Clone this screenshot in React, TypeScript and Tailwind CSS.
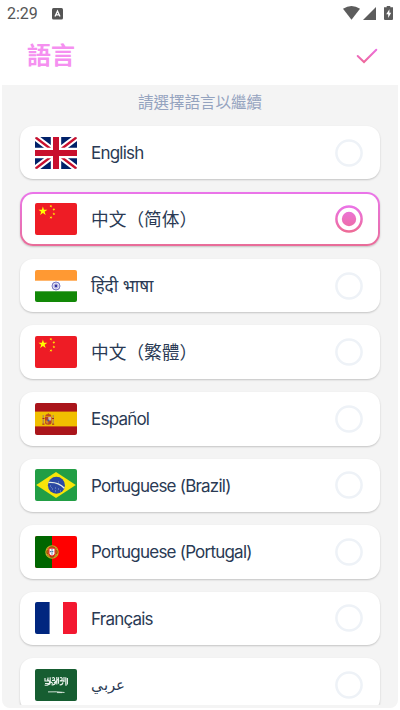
import { useState } from 'react';
import type { ReactNode } from 'react';
import { clsx } from 'clsx';

const Flag = ({ children }: { children: ReactNode }) => (
  <svg viewBox="0 0 42 32" className="h-8 w-[42px] shrink-0 rounded-[2px]">
    {children}
  </svg>
);

const FlagUK = () => (
  <Flag>
    <rect width="42" height="32" fill="#012169" />
    <path d="M0 0 42 32M42 0 0 32" stroke="#fff" strokeWidth="6.4" />
    <path d="M0 0 21 16M42 0 21 16" stroke="#c8102e" strokeWidth="2.4" />
    <path d="M21 16 42 32M21 16 0 32" stroke="#c8102e" strokeWidth="2.4" />
    <path d="M21 0V32M0 16H42" stroke="#fff" strokeWidth="10.4" />
    <path d="M21 0V32M0 16H42" stroke="#c8102e" strokeWidth="6" />
  </Flag>
);

const STAR = '0,-1 .2245,-.309 .951,-.309 .363,.118 .588,.809 0,.382 -.588,.809 -.363,.118 -.951,-.309 -.2245,-.309';

const FlagChina = () => (
  <Flag>
    <rect width="42" height="32" fill="#ee1c25" />
    <g fill="#ffff00">
      <polygon points={STAR} transform="translate(7.9 8.2) scale(4.7)" />
      <polygon points={STAR} transform="translate(15.9 3.2) rotate(23) scale(1.6)" />
      <polygon points={STAR} transform="translate(18.9 6.5) rotate(46) scale(1.6)" />
      <polygon points={STAR} transform="translate(18.9 10.9) scale(1.6)" />
      <polygon points={STAR} transform="translate(15.9 14.5) rotate(20) scale(1.6)" />
    </g>
  </Flag>
);

const FlagIndia = () => (
  <Flag>
    <rect width="42" height="32" fill="#fff" />
    <rect width="42" height="10.7" fill="#ff9933" />
    <rect y="21.3" width="42" height="10.7" fill="#128807" />
    <circle cx="21" cy="16" r="4" fill="#e6e6f5" stroke="#5c5cb4" strokeWidth=".8" />
    <g stroke="#8080c4" strokeWidth=".4">
      <path d="M17 16h8M21 12v8M18.2 13.2l5.6 5.6M23.8 13.2l-5.6 5.6" />
    </g>
    <circle cx="21" cy="16" r="1.4" fill="#3535a0" />
  </Flag>
);

const FlagSpain = () => (
  <Flag>
    <rect width="42" height="32" fill="#aa151b" />
    <rect y="8.6" width="42" height="14.8" fill="#f1bf00" />
    <path d="M8.2 12v9M18.2 12v9" stroke="#b08a55" strokeWidth="1.3" />
    <path d="M7.3 21.2h2.2M17 21.2h2.2M7.5 15.5h2M17 15.5h2" stroke="#ad2519" strokeWidth="1" />
    <path d="M10 13.7h6.6v5.5q0 2.5-3.3 2.5T10 19.2z" fill="#b5402a" />
    <path d="M13.3 14h2.8v3.5h-2.8z" fill="#d2b6b0" />
    <path d="M10.5 17.6h2.8v3.2q-2.6 0-2.8-1.8z" fill="#d98b20" />
    <circle cx="13.3" cy="17.6" r="1" fill="#3a63a0" />
    <path d="M10.3 13.3q0-2.4 3-2.4t3 2.4z" fill="#c4471b" />
    <path d="M13.3 10.2v1.2" stroke="#a86a1d" />
  </Flag>
);

const FlagBrazil = () => (
  <Flag>
    <rect width="42" height="32" fill="#229e45" />
    <path d="M21 3 40.8 16 21 29 1.2 16z" fill="#f8e509" />
    <circle cx="21.4" cy="16.2" r="8.5" fill="#2b49a3" />
    <path d="M13.4 13.5Q23.5 12.8 29.4 19.3" stroke="#e5eee5" strokeWidth="1.3" fill="none" />
    <path d="M15 17h1M17 20h1M20 19h1M23 20h1M25 22h1M20 22h1M23 13h.8M16 18.6h.6" stroke="#9fb6d4" strokeWidth=".8" />
  </Flag>
);

const FlagPortugal = () => (
  <Flag>
    <rect width="42" height="32" fill="#ff0000" />
    <rect width="17" height="32" fill="#006600" />
    <circle cx="17" cy="16" r="6.2" fill="#a43b08" stroke="#bdb025" strokeWidth="1.1" />
    <path d="M11 14.2q6-4.4 12 0M11 18q6 3.5 12 0M13.7 11q-1.6 5 .6 10.2M20.3 11q1.6 5-.6 10.2" stroke="#d0c52c" strokeWidth=".7" fill="none" />
    <path d="M13.4 11.8h7.2v5.5q0 3.2-3.6 3.2t-3.6-3.2z" fill="#e32222" />
    <path d="M14.5 12.8h5v4.5q0 2.1-2.5 2.1t-2.5-2.1z" fill="#fff" />
    <path d="M17 13.2v5.5M14.9 15.7h4.2" stroke="#517fae" strokeWidth="1.3" strokeDasharray="1.3 .7" />
  </Flag>
);

const FlagFrance = () => (
  <Flag>
    <rect width="42" height="32" fill="#fff" />
    <rect width="14.6" height="32" fill="#00267f" />
    <rect x="28" width="14" height="32" fill="#f31830" />
  </Flag>
);

const FlagSaudi = () => (
  <Flag>
    <rect width="42" height="32" fill="#165d31" />
    <g stroke="#e9f1eb" strokeWidth="1.15" fill="none">
      <path d="M10 9v3h3V8.5M10 14.5h4.5v-3M9.7 16q2 .8 4-.8M15.2 8.3v5.5q0 1.6-1.7 1.8M17 9.2q2-1.5 2.5.3t-2.5 2h3.2M16.5 15.8q4 .5 4.3-3M21.8 8v7.6M23.5 8.2v6.5M25 8.8q2-.8 2.2 1t-2.4 2h4M24.6 15.8q3 .3 3.4-2.5M29 8v5M30.8 8.2v7M32.4 9v6.4M30 16h2M19 14l4-3.6M12 10.5l6 4" />
    </g>
    <path d="M13 22.9q8-.5 16.5.6M22 23.6h5" stroke="#e1ebe4" strokeWidth=".9" fill="none" />
  </Flag>
);

const languages = [
  { id: 'en', label: 'English', flag: FlagUK },
  { id: 'zh-hans', label: '中文（简体）', flag: FlagChina },
  { id: 'hi', label: 'हिंदी भाषा', flag: FlagIndia },
  { id: 'zh-hant', label: '中文（繁體）', flag: FlagChina },
  { id: 'es', label: 'Español', flag: FlagSpain },
  { id: 'pt-br', label: 'Portuguese (Brazil)', flag: FlagBrazil },
  { id: 'pt', label: 'Portuguese (Portugal)', flag: FlagPortugal },
  { id: 'fr', label: 'Français', flag: FlagFrance },
  { id: 'ar', label: 'عربي', flag: FlagSaudi },
];

const labelFonts: Record<string, string> = {
  'zh-hans': "font-['Noto_Sans_CJK_SC',sans-serif] text-[17.7px] pb-[2px]",
  'zh-hant': "font-['Noto_Sans_CJK_JP',sans-serif] text-[17.7px] pb-[2px]",
  hi: "font-['Noto_Sans',sans-serif] text-[17.2px]",
  ar: "font-['Noto_Sans',sans-serif] text-[15px] pb-[2px]",
};

const Radio = ({ checked }: { checked: boolean }) => (
  <svg viewBox="0 0 28 28" className="size-7 shrink-0" fill="none">
    <defs>
      <linearGradient id="radio" x1="0" y1="0" x2="0" y2="28" gradientUnits="userSpaceOnUse">
        <stop stopColor="#ea74ea" />
        <stop offset="1" stopColor="#ee6c94" />
      </linearGradient>
    </defs>
    <circle cx="14" cy="14" r="12.6" stroke={checked ? 'url(#radio)' : '#eef2f7'} strokeWidth="2.5" />
    {checked && <circle cx="14" cy="14" r="7.2" fill="url(#radio)" />}
  </svg>
);

const StatusBar = () => (
  <div className="flex h-7 items-center justify-between pr-[7px] pl-[7px] text-[#555]">
    <div className="flex items-center gap-[14px]">
      <span className="font-['Roboto',sans-serif] text-[16px] leading-none">2:29</span>
      <svg viewBox="0 0 11 12" className="h-3 w-[11px]">
        <rect width="11" height="11.5" rx="1.5" fill="#555" />
        <path d="M3 8.5 5.5 3 8 8.5M4 6.8h3" stroke="#fff" strokeWidth="1.3" fill="none" />
      </svg>
    </div>
    <div className="flex items-center pb-[2px]">
      <svg viewBox="0 0 17 14" className="h-3.5 w-[17px]">
        <path d="M0 2.8Q8.5-2.8 17 2.8L8.5 13.8z" fill="#5c5c5c" />
      </svg>
      <svg viewBox="0 0 13 13" className="ml-[3px] h-[13px] w-[13px]">
        <path d="M13 0V13H0z" fill="#5c5c5c" />
      </svg>
      <svg viewBox="0 0 9 14" className="ml-2 h-3.5 w-[9px]">
        <path d="M2.7 0h3.6v1.3H9V13q0 1-1 1H1q-1 0-1-1V1.3h2.7z" fill="#5c5c5c" />
        <path d="M5.4 3.2 2.2 8.3h2v3.6l3-5.1H5.4z" fill="#fff" />
      </svg>
    </div>
  </div>
);

export default function App() {
  const [selected, setSelected] = useState('zh-hans');

  return (
    <div className="flex h-[710px] w-[400px] flex-col overflow-hidden bg-white font-['Inter','Noto_Sans_CJK_TC',sans-serif]">
      <StatusBar />

      <header className="flex h-[57px] shrink-0 items-center justify-between pr-[22.5px] pl-[27px]">
        <h1 className="pb-[5px] font-['Noto_Sans_CJK_TC',sans-serif] text-[24px] leading-none font-bold text-[#f590f0]">語言</h1>
        <button type="button" aria-label="確認" className="pb-px">
          <svg viewBox="0 0 22 16" className="h-4 w-[22px]" fill="none">
            <defs>
              <linearGradient id="check" x1="0" y1="0" x2="0" y2="16" gradientUnits="userSpaceOnUse">
                <stop stopColor="#ec70e8" />
                <stop offset="1" stopColor="#ee6790" />
              </linearGradient>
            </defs>
            <path d="M1.7 8 8 14 20.3 1.7" stroke="url(#check)" strokeWidth="2" strokeLinecap="round" />
          </svg>
        </button>
      </header>

      <main className="mr-[2px] ml-[2px] h-[623px] shrink-0 overflow-hidden rounded-b-lg bg-[#f4f4f4]">
        <div className="h-[620px] overflow-hidden px-[18px]">
          <p className="flex h-[40.8px] items-center justify-center pb-[7px] font-['Noto_Sans_CJK_TC',sans-serif] text-[15.5px] text-[#94a3bf]">
            請選擇語言以繼續
          </p>
          <div className="flex flex-col gap-[13px]">
            {languages.map(({ id, label, flag: FlagIcon }) => (
              <button
                key={id}
                type="button"
                onClick={() => setSelected(id)}
                className={clsx(
                  'h-[53.56px] w-full rounded-[13px] p-[2px] shadow-[0_1px_2px_rgba(0,0,0,0.2)]',
                  selected === id ? 'bg-linear-to-b from-[#ea74ea] to-[#e96c98]' : 'bg-white',
                )}
              >
                <span className="flex h-full items-center rounded-[11px] bg-white pr-[15.5px] pl-[13px]">
                  <FlagIcon />
                  <span
                    className={clsx(
                      'ml-3.5 flex-1 text-left whitespace-nowrap text-[#2a3a54]',
                      labelFonts[id] ?? 'pt-[2.5px] text-[17px] tracking-[-0.78px]',
                    )}
                  >
                    {label}
                  </span>
                  <Radio checked={selected === id} />
                </span>
              </button>
            ))}
          </div>
        </div>
      </main>
    </div>
  );
}
